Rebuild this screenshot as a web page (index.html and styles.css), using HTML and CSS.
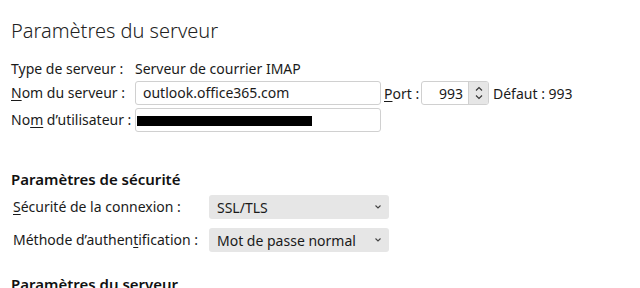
FILE: index.html
```html
<!DOCTYPE html>
<html lang="fr">
<head>
<meta charset="utf-8">
<link rel="stylesheet" href="styles.css">
</head>
<body>
<div class="page">
  <h1 class="title">Paramètres du serveur</h1>
  <div class="server-grid">
    <div class="label">Type de serveur :</div>
    <div class="value">Serveur de courrier IMAP</div>
    <div class="label"><u>N</u>om du serveur :</div>
    <div class="row-inline">
      <div class="input">outlook.office365.com</div>
      <span class="port-label"><u>P</u>ort :</span>
      <div class="spin">
        <span class="spin-val">993</span>
        <span class="spin-btns">
          <svg width="14" height="20" viewBox="0 0 14 20"><path d="M4 7.5 L7 4.5 L10 7.5" fill="none" stroke="#333" stroke-width="1.1"/><path d="M4 12.5 L7 15.5 L10 12.5" fill="none" stroke="#333" stroke-width="1.1"/></svg>
        </span>
      </div>
      <span class="default">Défaut : 993</span>
    </div>
    <div class="label">No<u>m</u> d’utilisateur :</div>
    <div class="row-inline">
      <div class="input"><span class="redact"></span></div>
    </div>
  </div>

  <h2 class="section">Paramètres de sécurité</h2>
  <div class="sec-grid">
    <div class="label"><u>S</u>écurité de la connexion :</div>
    <div class="select"><span>SSL/TLS</span><svg width="8" height="6" viewBox="0 0 8 6"><path d="M1.5 1.5 L4 4 L6.5 1.5" fill="none" stroke="#444" stroke-width="1.1"/></svg></div>
    <div class="label">Méthode d’authen<u>t</u>ification :</div>
    <div class="select"><span>Mot de passe normal</span><svg width="8" height="6" viewBox="0 0 8 6"><path d="M1.5 1.5 L4 4 L6.5 1.5" fill="none" stroke="#444" stroke-width="1.1"/></svg></div>
  </div>

  <h2 class="section bottom">Paramètres du serveur</h2>
</div>
</body>
</html>
```
FILE: styles.css
```css
html, body {
  margin: 0;
  padding: 0;
  background: #ffffff;
}
body {
  font-family: "Noto Sans", "Open Sans", sans-serif;
  color: #1a1a1a;
  font-size: 14px;
  overflow: hidden;
  width: 640px;
  height: 288px;
}
.page {
  padding: 0 0 0 11px;
}
u {
  text-decoration: underline;
  text-underline-offset: 2px;
  text-decoration-thickness: 1px;
}
.title {
  margin: 0;
  padding-top: 17px;
  font-size: 20px;
  font-weight: 300;
  line-height: 28px;
  color: #222;
  height: 42px;
}
.server-grid {
  display: grid;
  grid-template-columns: 124px auto;
  grid-template-rows: 19px 24px 24px;
  row-gap: 3px;
  align-items: center;
}
.label, .value {
  line-height: 18px;
  white-space: nowrap;
}
.row-inline {
  display: flex;
  align-items: center;
}
.input {
  box-sizing: border-box;
  width: 246px;
  height: 24px;
  border: 1px solid #d0d0d0;
  border-radius: 3px;
  padding: 0 7px;
  line-height: 22px;
  position: relative;
}
.redact {
  position: absolute;
  left: 1px;
  top: 7px;
  width: 175px;
  height: 10px;
  background: #000;
}
.port-label {
  margin-left: 3px;
  width: 37px;
}
.spin {
  box-sizing: border-box;
  width: 68px;
  height: 24px;
  border: 1px solid #d0d0d0;
  border-radius: 3px;
  display: flex;
  align-items: center;
  justify-content: flex-end;
}
.spin-val {
  margin-right: 5px;
}
.spin-btns {
  width: 19px;
  height: 22px;
  background: #e6e6e6;
  border-left: 1px solid #d0d0d0;
  display: flex;
  align-items: center;
  justify-content: center;
  border-radius: 0 2px 2px 0;
}
.default {
  margin-left: 4px;
}
.section {
  margin: 0;
  font-size: 15px;
  font-weight: 600;
  line-height: 20px;
  color: #111;
  white-space: nowrap;
}
.server-grid + .section {
  margin-top: 37px;
}
.sec-grid {
  display: grid;
  grid-template-columns: 196px 180px;
  grid-template-rows: 24px 24px;
  row-gap: 9px;
  align-items: center;
  margin-top: 6px;
  padding-left: 2px;
}
.select {
  box-sizing: border-box;
  height: 24px;
  background: #e6e6e6;
  border-radius: 3px;
  display: flex;
  align-items: center;
  justify-content: space-between;
  padding: 0 7px 0 8px;
}
.section.bottom {
  margin-top: 22px;
}
```
